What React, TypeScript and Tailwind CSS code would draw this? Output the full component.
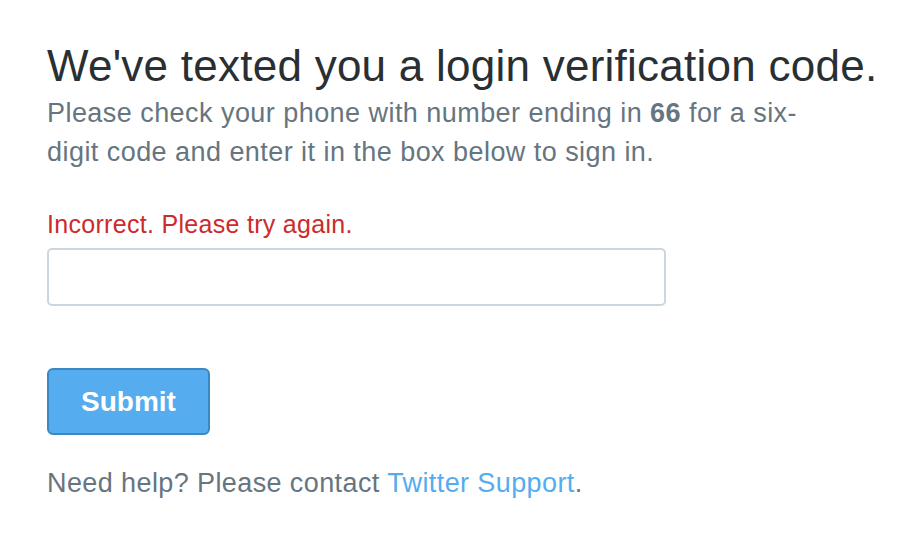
export default function App() {
  return (
    <div className="min-h-[538px] w-[912px] bg-white pl-[47px] pt-[38px] text-[#66757f]" style={{ fontFamily: '"Liberation Sans", Arial, sans-serif' }}>
      <h1 className="text-[44px] leading-[56px] text-[#292f33] tracking-[0.25px]">We've texted you a login verification code.</h1>
      <p className="w-[770px] text-[27px] leading-[39px] tracking-[0.45px]">
        Please check your phone with number ending in <strong className="font-bold text-[#66757f]">66</strong> for a six-digit code and enter it in the box below to sign in.
      </p>
      <div className="mt-[36px] text-[25px] leading-[32px] tracking-[0.3px] text-[#cc2b2b]">Incorrect. Please try again.</div>
      <input className="mt-[8px] block h-[58px] w-[619px] rounded-[5px] border-2 border-[#ccd6dd] bg-white outline-none" />
      <button className="mt-[62px] block h-[67px] w-[163px] rounded-[6px] border-2 border-[#3b88c3] bg-[#55acee] text-[28px] font-bold text-white">Submit</button>
      <p className="mt-[31px] text-[27px] leading-[34px] tracking-[0.4px]">
        Need help? Please contact <a className="text-[#55acee]">Twitter Support</a>.
      </p>
    </div>
  );
}
